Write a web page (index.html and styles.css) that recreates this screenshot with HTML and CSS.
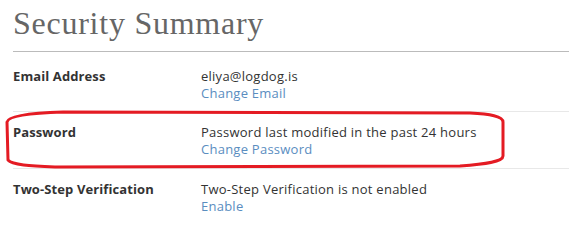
FILE: index.html
```html
<!DOCTYPE html>
<html lang="en">
<head>
    <meta charset="UTF-8">
    <meta name="viewport" content="width=device-width, initial-scale=1.0">
    <title>Security Summary</title>
    <link rel="stylesheet" href="styles.css">
</head>
<body>
    <div class="summary">
        <h1 class="title">Security Summary</h1>
        <div class="rows">
            <div class="row">
                <div class="label">Email Address</div>
                <div class="value">
                    <div>eliya@logdog.is</div>
                    <a href="#" class="link">Change Email</a>
                </div>
            </div>
            <div class="row">
                <div class="label">Password</div>
                <div class="value">
                    <div>Password last modified in the past 24 hours</div>
                    <a href="#" class="link">Change Password</a>
                </div>
            </div>
            <div class="row">
                <div class="label">Two-Step Verification</div>
                <div class="value">
                    <div>Two-Step Verification is not enabled</div>
                    <a href="#" class="link">Enable</a>
                </div>
            </div>
        </div>
    </div>

    <!-- red marker circle drawn over the password row -->
    <svg class="marker" width="569" height="232" viewBox="0 0 569 232">
        <path d="M63 112 L470 113 C490 114 503 116 503 122 L503 156 C503 162 485 164 460 166 L55 167 C30 166 12 165 8 160 L7 122 C8 116 30 113 63 112 Z"
              fill="none" stroke="#e41b23" stroke-width="3" stroke-linejoin="round"/>
    </svg>
</body>
</html>
```

FILE: styles.css
```css
* { margin: 0; padding: 0; box-sizing: border-box; }
body { font-family: "Open Sans", Arial, sans-serif; font-size: 13px; color: #333; background: #fff; overflow: hidden; }
.summary { margin-left: 13px; }
.title { font-family: "Liberation Serif", "Times New Roman", serif; font-weight: normal; font-size: 32px; line-height: 40px; letter-spacing: 0.75px; color: #666; margin-top: 3px; padding-bottom: 8px; border-bottom: 1px solid #bbb; }
.rows { margin-top: 4px; }
.row { display: flex; padding: 12px 0 10px; line-height: 17px; border-bottom: 1px solid #e8e8e8; }
.row:first-child { padding-bottom: 9px; }
.row:last-child { border-bottom: none; }
.label { width: 188px; flex-shrink: 0; font-weight: bold; letter-spacing: 0.1px; }
.value { flex: 1; letter-spacing: 0.25px; }
.link { color: #5a8dbf; text-decoration: none; }
.marker { position: absolute; left: 0; top: 0; pointer-events: none; }
```
